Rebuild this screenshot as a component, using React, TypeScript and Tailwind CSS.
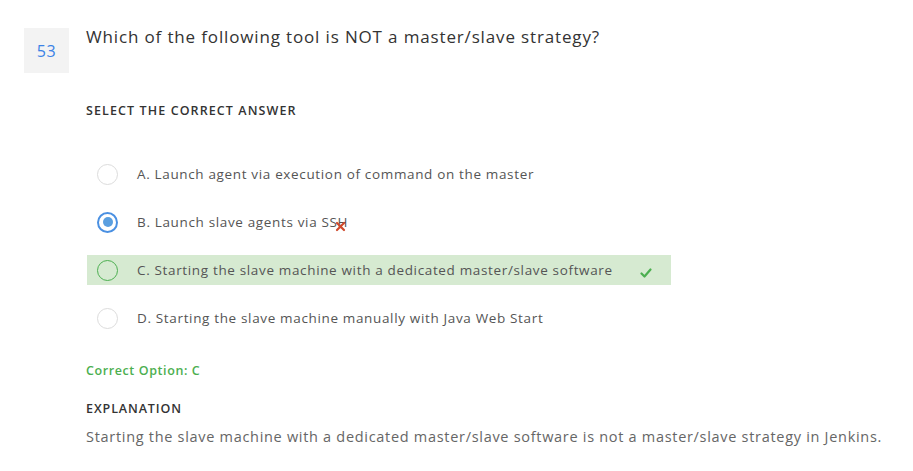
import React from "react";

const font = { fontFamily: "'Open Sans', Lato, sans-serif" };

function Radio({ kind }: { kind: "empty" | "selected" | "correct" }) {
  if (kind === "selected") {
    return (
      <div className="w-[21px] h-[21px] rounded-full border-2 border-[#4a90e2] flex items-center justify-center bg-white">
        <div className="w-[10px] h-[10px] rounded-full bg-[#5a9fe0]" />
      </div>
    );
  }
  if (kind === "correct") {
    return <div className="w-[21px] h-[21px] rounded-full border-[1.5px] border-[#4caf50]" />;
  }
  return <div className="w-[21px] h-[21px] rounded-full border border-[#dcdcdc] bg-white" />;
}

function Option({
  kind,
  letter,
  text,
  highlight,
  children,
}: {
  kind: "empty" | "selected" | "correct";
  letter: string;
  text: string;
  highlight?: boolean;
  children?: React.ReactNode;
}) {
  return (
    <div
      className={`relative flex items-center h-[30px] w-[584px] pl-[10px] ${highlight ? "bg-[#d6ead1]" : ""}`}
    >
      <Radio kind={kind} />
      <span className="ml-[19px] text-[13.5px] tracking-[0.65px] text-[#555555] relative leading-[18px]">
        {letter}. {text}
        {children}
      </span>
    </div>
  );
}

export default function App() {
  return (
    <div className="w-[913px] h-[471px] bg-white" style={font}>
      <div className="flex pt-[28px] pl-[24px]">
        <div className="w-[45px] h-[45px] bg-[#f3f3f3] flex items-center justify-center text-[16px] text-[#3b82e6] tracking-[0.5px]">
          53
        </div>
        <div className="ml-[17px] -mt-[1px] text-[17px] tracking-[0.85px] text-[#333333] leading-[20px]">
          Which of the following tool is NOT a master/slave strategy?
        </div>
      </div>
      <div className="pl-[86px]">
        <div className="mt-[31px] text-[12.5px] font-semibold text-[#333333] tracking-[1.1px] leading-[14px]">
          SELECT THE CORRECT ANSWER
        </div>
        <div className="mt-[41px] ml-[1px] flex flex-col gap-[18px]">
          <Option kind="empty" letter="A" text="Launch agent via execution of command on the master" />
          <Option kind="selected" letter="B" text="Launch slave agents via SSH">
            <svg className="absolute right-[2px] top-[8px]" width="11" height="11" viewBox="0 0 11 11">
              <path d="M2 2 L9 9 M9 2 L2 9" stroke="#cf4a2e" strokeWidth="2.2" strokeLinecap="round" />
            </svg>
          </Option>
          <Option kind="correct" letter="C" text="Starting the slave machine with a dedicated master/slave software" highlight>
            <svg className="absolute right-[-39px] top-[7px]" width="12" height="10" viewBox="0 0 12 10">
              <path d="M1.5 5.5 L4.5 8.5 L10.5 1.5" stroke="#4caf50" strokeWidth="2.2" fill="none" strokeLinecap="round" strokeLinejoin="round" />
            </svg>
          </Option>
          <Option kind="empty" letter="D" text="Starting the slave machine manually with Java Web Start" />
        </div>
        <div className="mt-[31px] text-[12.5px] font-semibold text-[#4caf50] tracking-[0.6px] leading-[14px]">Correct Option: C</div>
        <div className="mt-[24px] text-[12.5px] font-semibold text-[#333333] tracking-[0.9px] leading-[14px]">EXPLANATION</div>
        <div className="mt-[12px] text-[14.5px] tracking-[0.7px] text-[#666666] leading-[18px]">
          Starting the slave machine with a dedicated master/slave software is not a master/slave strategy in Jenkins.
        </div>
      </div>
    </div>
  );
}
